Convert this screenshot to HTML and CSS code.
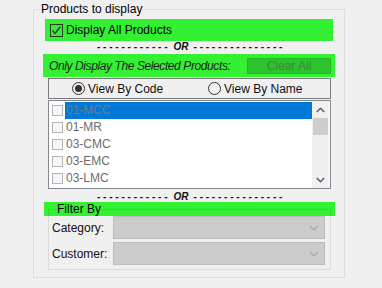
FILE: index.html
```html
<!DOCTYPE html>
<html>
<head>
<meta charset="utf-8">
<link rel="stylesheet" href="styles.css">
</head>
<body>
<div class="outer">
  <div class="legend">Products to display</div>
  <div class="bar bar1">
    <span class="chk">
      <svg width="11" height="11" viewBox="0 0 11 11"><polyline points="1.5,5.5 4,8.5 9.5,1.5" fill="none" stroke="#333" stroke-width="1.3"/></svg>
    </span>
    <span class="bar1-text">Display All Products</span>
  </div>
  <div class="orline or1">
    <span class="dashes">- - - - - - - - - - - -</span><span class="or">OR</span><span class="dashes">- - - - - - - - - - - - - - -</span>
  </div>
  <div class="bar bar2">
    <span class="sel-text">Only Display The Selected Products:</span>
    <span class="clear-btn">Clear All</span>
  </div>
  <div class="radiobox">
    <label class="radio-item first"><span class="radio checked"><span class="dot"></span></span><span>View By Code</span></label>
    <label class="radio-item"><span class="radio"></span><span>View By Name</span></label>
  </div>
  <div class="listbox">
    <div class="rows">
      <div class="row"><span class="lchk"></span><span class="ltext selected">01-MCC</span></div>
      <div class="row"><span class="lchk"></span><span class="ltext">01-MR</span></div>
      <div class="row"><span class="lchk"></span><span class="ltext">03-CMC</span></div>
      <div class="row"><span class="lchk"></span><span class="ltext">03-EMC</span></div>
      <div class="row"><span class="lchk"></span><span class="ltext">03-LMC</span></div>
    </div>
    <div class="scrollbar">
      <div class="arrow up"><svg width="9" height="6" viewBox="0 0 9 6"><polyline points="0.8,5 4.5,1.3 8.2,5" fill="none" stroke="#606060" stroke-width="1.6"/></svg></div>
      <div class="thumb"></div>
      <div class="track"></div>
      <div class="arrow down"><svg width="9" height="6" viewBox="0 0 9 6"><polyline points="0.8,1 4.5,4.7 8.2,1" fill="none" stroke="#606060" stroke-width="1.6"/></svg></div>
    </div>
  </div>
  <div class="orline or2">
    <span class="dashes">- - - - - - - - - - - -</span><span class="or">OR</span><span class="dashes">- - - - - - - - - - - - - - -</span>
  </div>
  <div class="bar bar3"><span class="filter-title">Filter By</span></div>
  <div class="filter-group">
    <div class="frow first">
      <span class="flabel">Category:</span>
      <span class="combo"><svg width="10" height="6" viewBox="0 0 10 6"><polyline points="1,1 5,4.8 9,1" fill="none" stroke="#a8a8a8" stroke-width="1.3"/></svg></span>
    </div>
    <div class="frow">
      <span class="flabel">Customer:</span>
      <span class="combo"><svg width="10" height="6" viewBox="0 0 10 6"><polyline points="1,1 5,4.8 9,1" fill="none" stroke="#a8a8a8" stroke-width="1.3"/></svg></span>
    </div>
  </div>
</div>
</body>
</html>
```
FILE: styles.css
```css
* { box-sizing: border-box; }
html, body { margin: 0; padding: 0; }
body {
  background: #f0f0f0;
  font-family: "Liberation Sans", Arial, sans-serif;
  font-size: 12px;
  color: #000;
  width: 382px;
  height: 288px;
  overflow: hidden;
}
.outer {
  margin: 9px 0 0 33px;
  width: 312px;
  height: 269px;
  border: 1px solid #dcdcdc;
  display: flex;
  flex-direction: column;
  align-items: flex-start;
}
.legend {
  margin: -8px 0 0 6px;
  padding: 0 1px;
  height: 14px;
  line-height: 14px;
  background: #f0f0f0;
  color: #000;
}
.bar {
  background: #33f033;
  display: flex;
  align-items: center;
}
.bar1 {
  margin: 3px 0 0 11px;
  width: 288px;
  height: 22px;
}
.chk {
  margin-left: 5px;
  width: 13px;
  height: 13px;
  border: 1px solid #333;
  display: flex;
  align-items: center;
  justify-content: center;
}
.bar1-text {
  margin-left: 3px;
}
.orline {
  margin-left: 63px;
  height: 12px;
  line-height: 12px;
  font-size: 10px;
  font-weight: bold;
  font-style: italic;
  color: #111;
  display: flex;
  white-space: pre;
}
.orline .dashes { word-spacing: 0px; }
.orline .or { margin: 0 5px 0 6px; }
.or2 { margin-top: 2px; height: 11px; line-height: 11px; }
.bar2 {
  margin: 1px 0 0 9px;
  width: 292px;
  height: 23px;
  justify-content: space-between;
}
.sel-text {
  margin-left: 6px;
  font-style: italic;
  letter-spacing: -0.4px;
  color: #1e1e1e;
}
.clear-btn {
  margin-right: 4px;
  width: 84px;
  height: 16px;
  background: #2cc42c;
  border: 1px solid #27b527;
  color: #3e8a3e;
  display: flex;
  align-items: center;
  justify-content: center;
}
.radiobox {
  margin: 1px 0 0 14px;
  width: 283px;
  height: 21px;
  border: 1px solid #7a7a7a;
  display: flex;
  align-items: center;
  padding-left: 23px;
}
.radio-item {
  display: flex;
  align-items: center;
  gap: 3px;
  color: #111;
}
.radio-item.first { width: 136px; }
.radio {
  width: 13px;
  height: 13px;
  border: 1px solid #333;
  border-radius: 50%;
  display: flex;
  align-items: center;
  justify-content: center;
}
.dot {
  width: 7px;
  height: 7px;
  border-radius: 50%;
  background: #333;
}
.listbox {
  margin: 1px 0 0 14px;
  width: 283px;
  height: 89px;
  border: 1px solid #828790;
  background: #fff;
  display: flex;
}
.rows {
  flex: 1;
  padding-top: 1px;
  display: flex;
  flex-direction: column;
}
.row {
  height: 17px;
  display: flex;
  align-items: center;
}
.lchk {
  margin-left: 3px;
  width: 11px;
  height: 11px;
  border: 1px solid #b5b5b5;
  background: #f6f6f6;
}
.ltext {
  margin-left: 2px;
  height: 17px;
  line-height: 17px;
  flex: 1;
  padding-left: 1px;
  color: #6d6d6d;
}
.ltext.selected { background: #0078d7; color: #6b7f93; }
.scrollbar {
  width: 17px;
  margin-right: 1px;
  background: #f0f0f0;
  display: flex;
  flex-direction: column;
}
.arrow {
  height: 17px;
  display: flex;
  align-items: center;
  justify-content: center;
}
.thumb {
  margin: 0 1px;
  height: 17px;
  background: #cdcdcd;
}
.track { flex: 1; }
.bar3 {
  margin: 0 0 0 10px;
  width: 291px;
  height: 14px;
  line-height: 14px;
}
.filter-title {
  position: relative;
  z-index: 1;
  margin-left: 12px;
  padding: 0 1px;
  background: #33f033;
}
.filter-group {
  margin: -7px 0 0 14px;
  width: 283px;
  height: 61px;
  border: 1px solid rgba(0, 0, 0, 0.09);
  display: flex;
  flex-direction: column;
}
.frow {
  margin-top: 3px;
  height: 23px;
  display: flex;
  align-items: center;
}
.frow.first { margin-top: 6px; }
.flabel {
  width: 64px;
  padding-left: 3px;
  color: #111;
}
.combo {
  width: 212px;
  height: 23px;
  background: #cccccc;
  border: 1px solid #bcbcbc;
  display: flex;
  align-items: center;
  justify-content: flex-end;
  padding-right: 5px;
}
```
